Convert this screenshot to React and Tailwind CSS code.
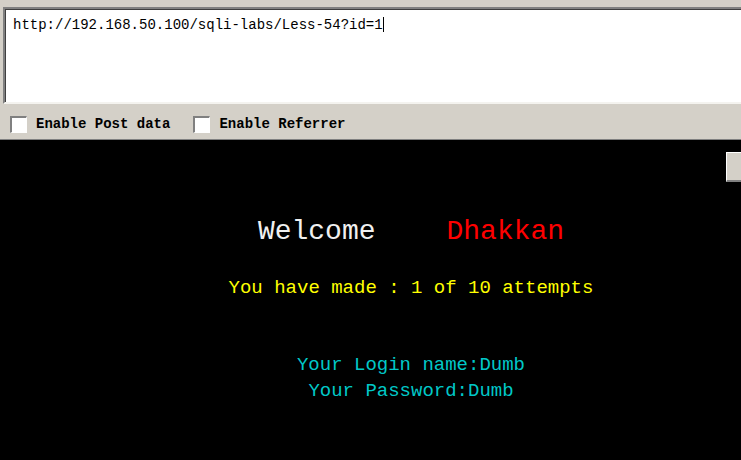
export default function App() {
    const mono = { fontFamily: '"Liberation Mono", "DejaVu Sans Mono", monospace' };

    return (
        <div className="w-[741px] h-[460px] overflow-hidden bg-[#d4d0c8] flex flex-col" style={mono}>
            {/* url box */}
            <div className="pt-[7px] pl-[3px]">
                <div className="h-[97px] border-t-2 border-l-2 border-t-[#808080] border-l-[#808080] border-b-2 border-b-[#f4f3ef] bg-white">
                    <div className="h-full border-t border-l border-[#404040] pl-[7px] pt-[6px] text-[14px] leading-[18px] text-black">
                        http://192.168.50.100/sqli-labs/Less-54?id=1<span className="inline-block w-px h-[15px] bg-black align-[-3px]"></span>
                    </div>
                </div>
            </div>

            {/* options */}
            <div className="h-[36px] flex items-center pt-[6px] pl-[10px] text-[14px] text-black border-b border-[#808080]">
                <div className="flex items-center">
                    <div className="w-[17px] h-[17px] bg-white border-t-2 border-l-2 border-t-[#808080] border-l-[#808080] border-b border-r border-b-white border-r-white"></div>
                    <span className="ml-[9px] font-bold">Enable Post data</span>
                </div>
                <div className="flex items-center ml-[23px]">
                    <div className="w-[17px] h-[17px] bg-white border-t-2 border-l-2 border-t-[#808080] border-l-[#808080] border-b border-r border-b-white border-r-white"></div>
                    <span className="ml-[9px] font-bold">Enable Referrer</span>
                </div>
            </div>

            {/* page */}
            <div className="flex-1 bg-black relative">
                <div className="absolute right-0 top-[12px] w-[15px] h-[30px] bg-[#d4d0c8] border-t border-l border-white border-b-2 border-b-[#808080]"></div>

                <div className="pl-[81px] flex flex-col items-center">
                    <div className="mt-[72px] text-[28px] leading-[40px] flex">
                        <span className="text-[#f0f0f0]">Welcome</span>
                        <span className="ml-[71px] text-[#ff0000]">Dhakkan</span>
                    </div>
                    <div className="mt-[23px] text-[19px] leading-[26px] text-[#ffff00]">
                        You have made : 1 of 10 attempts
                    </div>
                    <div className="mt-[51px] text-[19px] leading-[26px] text-[#00c8c8] text-center">
                        <div>Your Login name:Dumb</div>
                        <div>Your Password:Dumb</div>
                    </div>
                </div>
            </div>
        </div>
    );
}
